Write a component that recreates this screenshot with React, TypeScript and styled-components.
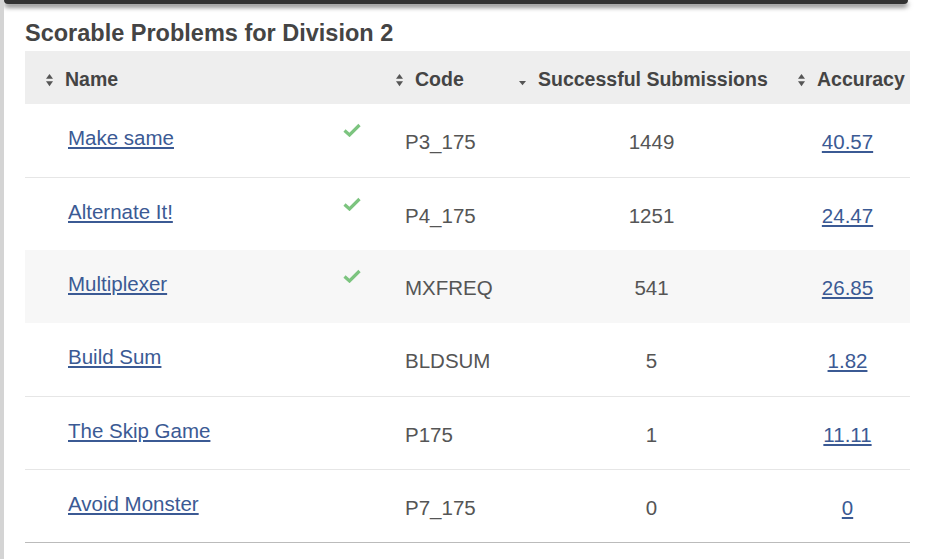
import styled, { createGlobalStyle } from 'styled-components'

const Global = createGlobalStyle`
  body { margin: 0; background: #fff; font-family: "Liberation Sans", Arial, sans-serif; }
`

const Page = styled.div`
  position: relative;
  height: 559px;
  overflow: hidden;
  border-left: 4px solid #d4d4d4;
  box-sizing: border-box;
`

const TopBar = styled.div`
  height: 4px;
  width: 904px;
  background: #333;
  box-shadow: 0 3px 5px rgba(0, 0, 0, 0.6);
  border-radius: 0 0 4px 4px;
`

const Section = styled.div`
  padding: 17px 0 0 21px;
  width: 885px;
`

const Title = styled.h2`
  margin: 0 0 6px;
  font-size: 23.5px;
  font-weight: bold;
  color: #444;
  line-height: 24px;
`

const Table = styled.table`
  width: 885px;
  border-collapse: collapse;
  font-size: 20.5px;
  color: #555;
  border-bottom: 1px solid #bbb;
`

const Th = styled.th<{ $w: number }>`
  width: ${p => p.$w}px;
  height: 53px;
  background: #eee;
  color: #444;
  font-weight: bold;
  font-size: 19.5px;
  text-align: left;
  padding: 4px 0 0 20px;
  white-space: nowrap;
  box-sizing: border-box;
`

const Sort = ({ down }: { down?: boolean }) => (
  <SortSvg viewBox="0 0 10 16" width="9" height="14">
    {!down && <path d="M1 6.5 L5 1 L9 6.5 Z" fill="#555" />}
    <path d={down ? 'M1 9 L5 14 L9 9 Z' : 'M1 9.5 L5 15 L9 9.5 Z'} fill="#555" />
  </SortSvg>
)

const SortSvg = styled.svg`
  margin-right: 11px;
  vertical-align: -1px;
`

const Tr = styled.tr<{ $hl?: boolean }>`
  height: 73px;
  background: ${p => (p.$hl ? '#f7f7f7' : '#fff')};
  & + & td { border-top: 1px solid #e6e6e6; }
`

const Td = styled.td<{ $align?: string; $pl?: number; $pt?: number }>`
  text-align: ${p => p.$align || 'left'};
  padding: ${p => p.$pt ?? 24}px 0 0 ${p => p.$pl ?? 0}px;
  vertical-align: top;
`

const NameCell = styled.div`
  display: flex;
  justify-content: space-between;
  padding-right: 14px;
`

const Link = styled.a`
  color: #3b5a94;
  text-decoration: underline;
  cursor: pointer;
`

const Check = styled.svg`
  margin-top: -3px;
`

const rows = [
  ['Make same', true, 'P3_175', '1449', '40.57'],
  ['Alternate It!', true, 'P4_175', '1251', '24.47'],
  ['Multiplexer', true, 'MXFREQ', '541', '26.85'],
  ['Build Sum', false, 'BLDSUM', '5', '1.82'],
  ['The Skip Game', false, 'P175', '1', '11.11'],
  ['Avoid Monster', false, 'P7_175', '0', '0'],
] as const

export default function App() {
  return (
    <Page>
      <Global />
      <TopBar />
      <Section>
        <Title>Scorable Problems for Division 2</Title>
        <Table>
          <thead>
            <tr>
              <Th $w={350}><Sort />Name</Th>
              <Th $w={143}><Sort />Code</Th>
              <Th $w={267} style={{ paddingLeft: 0 }}><Sort down />Successful Submissions</Th>
              <Th $w={125} style={{ paddingLeft: 12 }}><Sort />Accuracy</Th>
            </tr>
          </thead>
          <tbody>
            {rows.map(([name, ok, code, subs, acc], i) => (
              <Tr key={code} $hl={i === 2}>
                <Td $pl={43} $pt={22}>
                  <NameCell>
                    <Link>{name}</Link>
                    {ok && (
                      <Check viewBox="0 0 18 14" width="18" height="14">
                        <path d="M1.5 7.5 L6.5 12 L16.5 2" stroke="#7cc47f" strokeWidth="3.2" fill="none" />
                      </Check>
                    )}
                  </NameCell>
                </Td>
                <Td $pl={30} $pt={26}>{code}</Td>
                <Td $align="center" $pt={26}>{subs}</Td>
                <Td $align="center" $pt={26}><Link>{acc}</Link></Td>
              </Tr>
            ))}
          </tbody>
        </Table>
      </Section>
    </Page>
  )
}
